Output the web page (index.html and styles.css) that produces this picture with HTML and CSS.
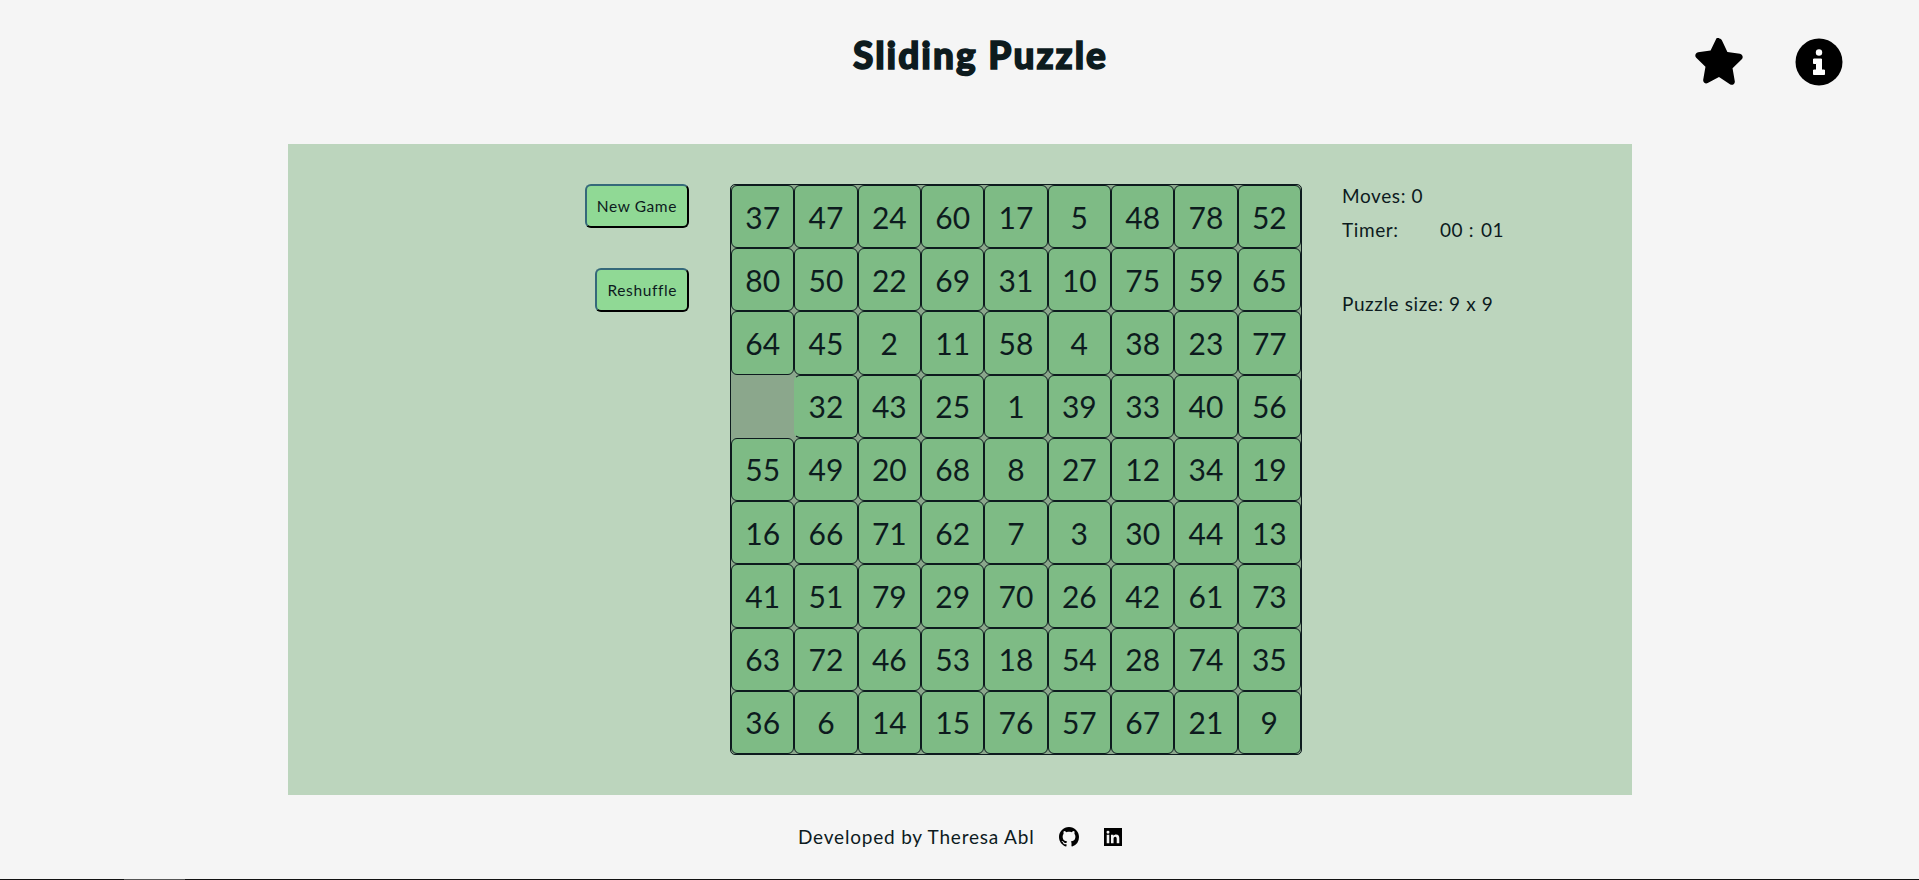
FILE: index.html
```html
<!DOCTYPE html>
<html lang="en">
<head>
  <meta charset="UTF-8" />
  <title>Sliding Puzzle</title>
  <link rel="stylesheet" href="styles.css">
</head>
<body>
  <header class="top">
    <h1 class="title">Sliding Puzzle</h1>
    <div class="top-icons">
      <svg class="top-icon" viewBox="0.3 1.2 23.4 22.9" aria-label="Highscores">
        <path d="M12 1.2c.6 0 1.1.3 1.4.9l2.7 5.7 6.1.8c1.3.2 1.8 1.8.9 2.7l-4.5 4.4 1.1 6.3c.2 1.3-1.100 2.200-2.200 1.600L12 20l-5.500 2.900c-1.100.6-2.400-.3-2.200-1.600l1.100-6.300L.9 10.600c-.9-.9-.4-2.500.9-2.700l6.100-.8 2.700-5.700c.3-.6.8-.9 1.400-.9z"/>
      </svg>
      <svg class="top-icon" viewBox="0 0 48 48" aria-label="Info">
        <circle cx="24" cy="24" r="23.500"/>
        <circle cx="24" cy="14.500" r="3.200" fill="#fff"/>
        <path d="M18.500 21h8v11h3v4.500h-11V32h3v-6.500h-3z" fill="#fff" stroke="#fff" stroke-linejoin="round"/>
      </svg>
    </div>
  </header>

  <main class="panel">
    <div class="actions">
      <button class="btn">New Game</button>
      <button class="btn">Reshuffle</button>
    </div>

    <div class="board">
      <div class="tile">37</div><div class="tile">47</div><div class="tile">24</div><div class="tile">60</div><div class="tile">17</div><div class="tile">5</div><div class="tile">48</div><div class="tile">78</div><div class="tile">52</div>
      <div class="tile">80</div><div class="tile">50</div><div class="tile">22</div><div class="tile">69</div><div class="tile">31</div><div class="tile">10</div><div class="tile">75</div><div class="tile">59</div><div class="tile">65</div>
      <div class="tile">64</div><div class="tile">45</div><div class="tile">2</div><div class="tile">11</div><div class="tile">58</div><div class="tile">4</div><div class="tile">38</div><div class="tile">23</div><div class="tile">77</div>
      <div class="tile empty"></div><div class="tile next-to-empty">32</div><div class="tile">43</div><div class="tile">25</div><div class="tile">1</div><div class="tile">39</div><div class="tile">33</div><div class="tile">40</div><div class="tile">56</div>
      <div class="tile">55</div><div class="tile">49</div><div class="tile">20</div><div class="tile">68</div><div class="tile">8</div><div class="tile">27</div><div class="tile">12</div><div class="tile">34</div><div class="tile">19</div>
      <div class="tile">16</div><div class="tile">66</div><div class="tile">71</div><div class="tile">62</div><div class="tile">7</div><div class="tile">3</div><div class="tile">30</div><div class="tile">44</div><div class="tile">13</div>
      <div class="tile">41</div><div class="tile">51</div><div class="tile">79</div><div class="tile">29</div><div class="tile">70</div><div class="tile">26</div><div class="tile">42</div><div class="tile">61</div><div class="tile">73</div>
      <div class="tile">63</div><div class="tile">72</div><div class="tile">46</div><div class="tile">53</div><div class="tile">18</div><div class="tile">54</div><div class="tile">28</div><div class="tile">74</div><div class="tile">35</div>
      <div class="tile">36</div><div class="tile">6</div><div class="tile">14</div><div class="tile">15</div><div class="tile">76</div><div class="tile">57</div><div class="tile">67</div><div class="tile">21</div><div class="tile">9</div>
    </div>

    <div class="info">
      <p class="info-line">Moves: 0</p>
      <p class="info-line timer"><span class="timer-label">Timer:</span><span class="timer-min">00 :</span><span>01</span></p>
      <p class="info-line size">Puzzle size: 9 x 9</p>
    </div>
  </main>

  <footer class="foot">
    <span class="foot-text">Developed by Theresa Abl</span>
    <svg class="foot-git" viewBox="0 0 16 16" aria-label="GitHub">
      <path d="M8 0C3.580 0 0 3.580 0 8c0 3.540 2.290 6.530 5.470 7.590.4.070.55-.17.55-.38 0-.19-.01-.82-.01-1.490-2.010.37-2.530-.49-2.690-.94-.09-.23-.48-.94-.82-1.130-.28-.15-.68-.52-.01-.53.630-.01 1.080.58 1.230.82.720 1.210 1.870.870 2.330.660.070-.520.280-.870.510-1.070-1.780-.2-3.640-.890-3.640-3.950 0-.870.310-1.590.820-2.150-.080-.2-.360-1.020.080-2.120 0 0 .670-.210 2.200.820.640-.180 1.320-.270 2-.270s1.360.090 2 .270c1.530-1.040 2.200-.820 2.200-.820.440 1.100.160 1.920.080 2.120.510.560.820 1.270.820 2.150 0 3.070-1.870 3.750-3.650 3.950.290.250.540.730.540 1.480 0 1.070-.010 1.930-.010 2.200 0 .210.150.460.550.380A8.010 8.010 0 0 0 16 8c0-4.420-3.580-8-8-8z"/>
    </svg>
    <svg class="foot-in" viewBox="0 0 16 16" aria-label="LinkedIn">
      <path d="M0 0h16v16H0z"/>
      <path fill="#f5f5f5" d="M2.400 6h2.300v7.600H2.400zM3.550 2.400a1.330 1.330 0 1 1 0 2.660 1.330 1.330 0 0 1 0-2.660zM6.200 6h2.200v1c.4-.7 1.200-1.200 2.300-1.200 2.200 0 2.900 1.400 2.900 3.400v4.400h-2.300V9.700c0-1-.2-1.900-1.300-1.900s-1.500.9-1.500 1.900v3.900H6.200z"/>
    </svg>
  </footer>

  <div class="edge"><div class="edge-thumb"></div></div>
</body>
</html>
```

FILE: styles.css
```css
* {
  box-sizing: border-box;
}
body {
  margin: 0;
  height: 880px;
  overflow: hidden;
  display: flex;
  flex-direction: column;
  background: #f5f5f5;
  color: #0d1b1e;
  font-family: Lato, sans-serif;
}

.top {
  height: 144px;
  display: flex;
  align-items: flex-start;
  padding-left: 853px;
  padding-right: 76px;
}
.title {
  margin: 31px 0 0;
  font-size: 37px;
  line-height: 48px;
  font-weight: 900;
  letter-spacing: 2px;
  -webkit-text-stroke: 1.500px #0d1b1e;
}
.top-icons {
  margin-left: auto;
  margin-top: 38px;
  display: flex;
  gap: 52px;
}
.top-icon {
  width: 48px;
  height: 48px;
  display: block;
}

.panel {
  margin-left: 288px;
  width: 1344px;
  height: 651px;
  background: #bcd5bd;
  padding-top: 40px;
  display: grid;
  grid-template-columns: 442px 612px 1fr;
  align-items: start;
}
.actions {
  padding-right: 41px;
  display: flex;
  flex-direction: column;
  align-items: flex-end;
  gap: 40px;
}
.btn {
  height: 44px;
  padding: 0 10px;
  font-family: Lato, sans-serif;
  font-size: 15.500px;
  letter-spacing: 0.600px;
  color: #0d1b1e;
  background: #90d995;
  border: 2px solid;
  border-color: #35697a #000 #000 #35697a;
  border-radius: 6px;
}

.board {
  width: 572px;
  height: 571px;
  display: grid;
  grid-template-columns: repeat(9, 1fr);
  grid-template-rows: repeat(9, 1fr);
  background: #8ba78c;
  border: 1px solid #0d1b1e;
  border-radius: 5px;
}
.tile {
  display: flex;
  align-items: center;
  justify-content: center;
  font-size: 30px;
  background: #7ebb85;
  border: 1px solid #0d1b1e;
  border-radius: 6px;
}
.tile.empty {
  background: transparent;
  border: 0;
}
.tile.next-to-empty {
  border-left-color: transparent;
}

.info {
  font-size: 19px;
  line-height: 24px;
  letter-spacing: 0.600px;
}
.info-line {
  margin: 0 0 10px;
}
.timer {
  display: flex;
}
.timer-label {
  width: 98px;
}
.timer-min {
  width: 41px;
}
.size {
  margin-top: 50px;
}

.foot {
  flex: 1;
  padding-left: 798px;
  padding-top: 29px;
  display: flex;
  align-items: flex-start;
  font-size: 19px;
  letter-spacing: 0.800px;
}
.foot-text {
  line-height: 26px;
}
.foot-git {
  width: 20px;
  height: 20px;
  margin-left: 25px;
  margin-top: 3px;
}
.foot-in {
  width: 18px;
  height: 18px;
  margin-left: 25px;
  margin-top: 4px;
}

.edge {
  height: 1px;
  background: #111;
  padding-left: 124px;
}
.edge-thumb {
  width: 61px;
  height: 1px;
  background: #555;
}
```
